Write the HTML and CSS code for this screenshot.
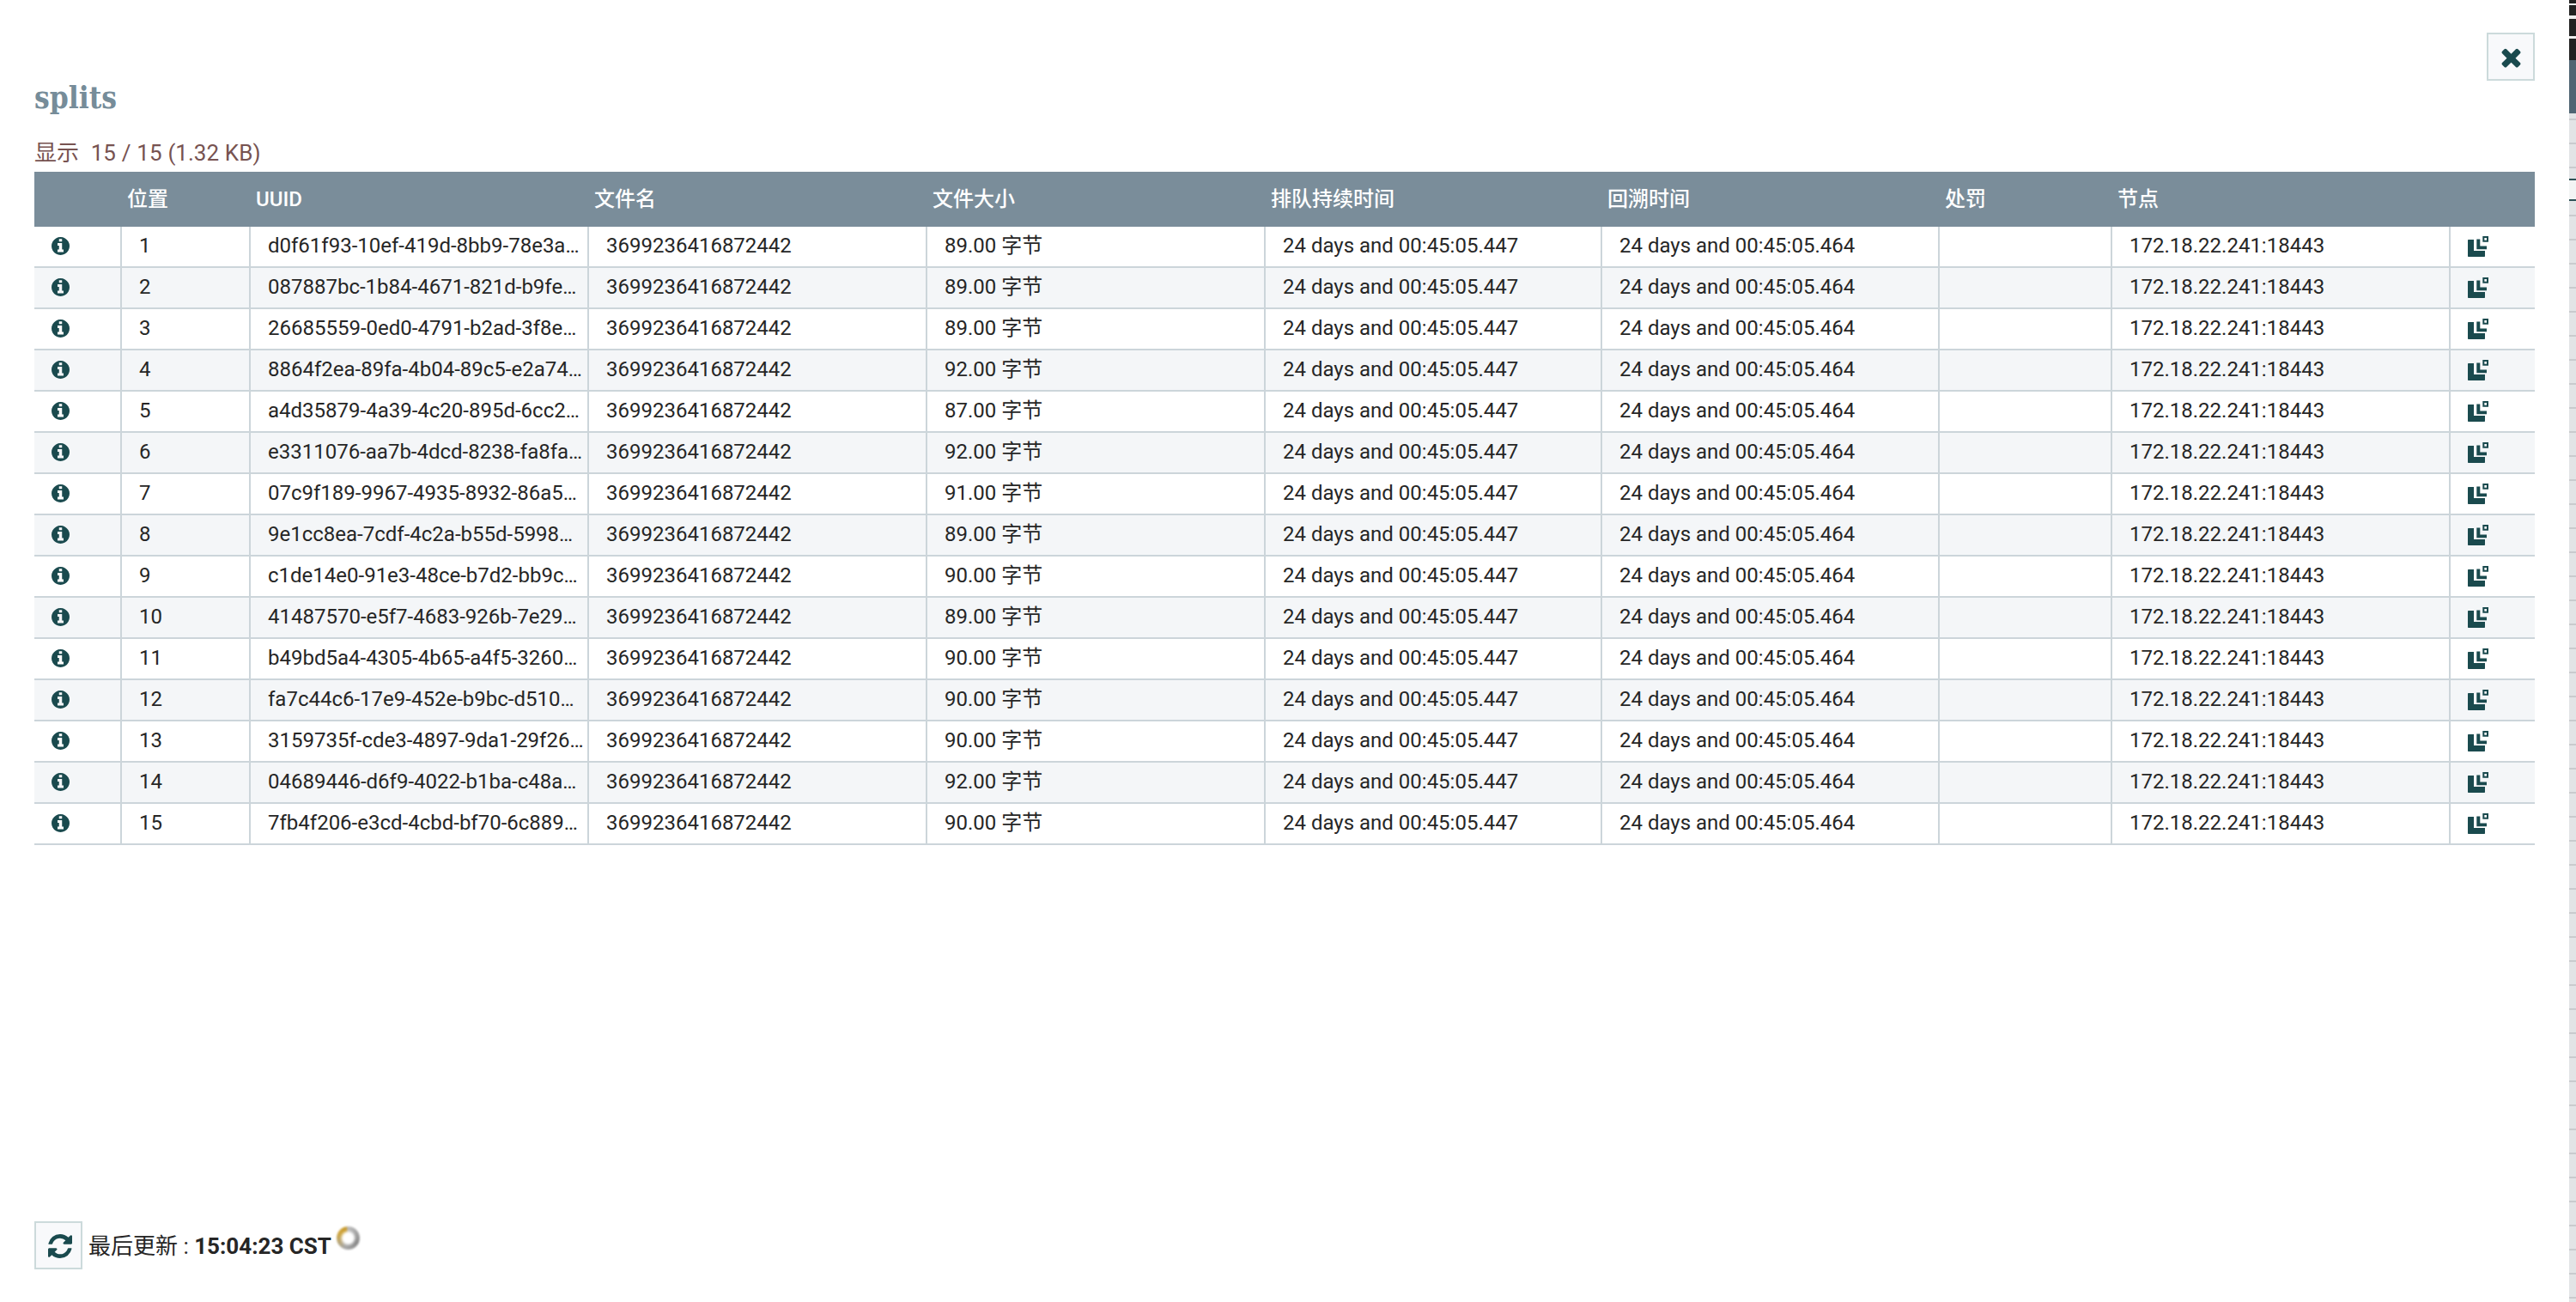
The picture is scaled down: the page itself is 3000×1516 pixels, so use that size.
FILE: index.html
```html
<!DOCTYPE html>
<html lang="zh">
<head>
<meta charset="utf-8">
<title>splits</title>
<link rel="stylesheet" href="styles.css">
</head>
<body>
<svg class="defs" aria-hidden="true">
  <symbol id="i-info" viewBox="128 128 1536 1536"><path d="M1152 1376v-160q0-14-9-23t-23-9h-96v-512q0-14-9-23t-23-9h-320q-14 0-23 9t-9 23v160q0 14 9 23t23 9h96v320h-96q-14 0-23 9t-9 23v160q0 14 9 23t23 9h448q14 0 23-9t9-23zm-128-896v-160q0-14-9-23t-23-9h-192q-14 0-23 9t-9 23v160q0 14 9 23t23 9h192q14 0 23-9t9-23zm640 416q0 209-103 385.5t-279.5 279.5-385.5 103-385.5-103-279.5-279.5-103-385.5 103-385.5 279.5-279.5 385.5-103 385.5 103 279.5 279.5 103 385.5z"/></symbol>
  <symbol id="i-lineage" viewBox="0 0 24 24"><path d="M0.7 4h6.3v13h13v6.3q0 .7-.7.7H.7q-.7 0-.7-.7V4.7q0-.7.7-.7z"/><path d="M10.3 3.4h4v8h7.7v3.9H10.3z"/><path fill-rule="evenodd" d="M17.3 0H24v6.7h-6.7zM19.3 2v2.7H22V2z"/></symbol>
</svg>
<div class="page">
  <main class="dialog">
    <button class="icon-btn close-btn" type="button" aria-label="关闭"><svg class="btn-icon times" viewBox="0 0 1792 1792"><path d="M1490 1322q0 40-28 68l-136 136q-28 28-68 28t-68-28l-294-294-294 294q-28 28-68 28t-68-28l-136-136q-28-28-28-68t28-68l294-294-294-294q-28-28-28-68t28-68l136-136q28-28 68-28t68 28l294 294 294-294q28-28 68-28t68 28l136 136q28 28 28 68t-28 68l-294 294 294 294q28 28 28 68z"/></svg></button>
    <h1 class="title">splits</h1>
    <div class="stats">显示&nbsp; 15 / 15 (1.32 KB)</div>
    <table class="grid">
      <colgroup>
        <col class="c-info"><col class="c-pos"><col class="c-wide"><col class="c-wide"><col class="c-wide"><col class="c-queue"><col class="c-time"><col class="c-pen"><col class="c-wide"><col class="c-act">
      </colgroup>
      <thead>
        <tr><th></th><th>位置</th><th>UUID</th><th>文件名</th><th>文件大小</th><th>排队持续时间</th><th>回溯时间</th><th>处罚</th><th>节点</th><th></th></tr>
      </thead>
      <tbody>
        <tr><td><svg class="ico"><use href="#i-info"/></svg></td><td>1</td><td>d0f61f93-10ef-419d-8bb9-78e3a…</td><td>3699236416872442</td><td>89.00 字节</td><td>24 days and 00:45:05.447</td><td>24 days and 00:45:05.464</td><td></td><td>172.18.22.241:18443</td><td><svg class="ico lin"><use href="#i-lineage"/></svg></td></tr>
        <tr><td><svg class="ico"><use href="#i-info"/></svg></td><td>2</td><td>087887bc-1b84-4671-821d-b9fe…</td><td>3699236416872442</td><td>89.00 字节</td><td>24 days and 00:45:05.447</td><td>24 days and 00:45:05.464</td><td></td><td>172.18.22.241:18443</td><td><svg class="ico lin"><use href="#i-lineage"/></svg></td></tr>
        <tr><td><svg class="ico"><use href="#i-info"/></svg></td><td>3</td><td>26685559-0ed0-4791-b2ad-3f8e…</td><td>3699236416872442</td><td>89.00 字节</td><td>24 days and 00:45:05.447</td><td>24 days and 00:45:05.464</td><td></td><td>172.18.22.241:18443</td><td><svg class="ico lin"><use href="#i-lineage"/></svg></td></tr>
        <tr><td><svg class="ico"><use href="#i-info"/></svg></td><td>4</td><td>8864f2ea-89fa-4b04-89c5-e2a74…</td><td>3699236416872442</td><td>92.00 字节</td><td>24 days and 00:45:05.447</td><td>24 days and 00:45:05.464</td><td></td><td>172.18.22.241:18443</td><td><svg class="ico lin"><use href="#i-lineage"/></svg></td></tr>
        <tr><td><svg class="ico"><use href="#i-info"/></svg></td><td>5</td><td>a4d35879-4a39-4c20-895d-6cc2…</td><td>3699236416872442</td><td>87.00 字节</td><td>24 days and 00:45:05.447</td><td>24 days and 00:45:05.464</td><td></td><td>172.18.22.241:18443</td><td><svg class="ico lin"><use href="#i-lineage"/></svg></td></tr>
        <tr><td><svg class="ico"><use href="#i-info"/></svg></td><td>6</td><td>e3311076-aa7b-4dcd-8238-fa8fa…</td><td>3699236416872442</td><td>92.00 字节</td><td>24 days and 00:45:05.447</td><td>24 days and 00:45:05.464</td><td></td><td>172.18.22.241:18443</td><td><svg class="ico lin"><use href="#i-lineage"/></svg></td></tr>
        <tr><td><svg class="ico"><use href="#i-info"/></svg></td><td>7</td><td>07c9f189-9967-4935-8932-86a5…</td><td>3699236416872442</td><td>91.00 字节</td><td>24 days and 00:45:05.447</td><td>24 days and 00:45:05.464</td><td></td><td>172.18.22.241:18443</td><td><svg class="ico lin"><use href="#i-lineage"/></svg></td></tr>
        <tr><td><svg class="ico"><use href="#i-info"/></svg></td><td>8</td><td>9e1cc8ea-7cdf-4c2a-b55d-5998…</td><td>3699236416872442</td><td>89.00 字节</td><td>24 days and 00:45:05.447</td><td>24 days and 00:45:05.464</td><td></td><td>172.18.22.241:18443</td><td><svg class="ico lin"><use href="#i-lineage"/></svg></td></tr>
        <tr><td><svg class="ico"><use href="#i-info"/></svg></td><td>9</td><td>c1de14e0-91e3-48ce-b7d2-bb9c…</td><td>3699236416872442</td><td>90.00 字节</td><td>24 days and 00:45:05.447</td><td>24 days and 00:45:05.464</td><td></td><td>172.18.22.241:18443</td><td><svg class="ico lin"><use href="#i-lineage"/></svg></td></tr>
        <tr><td><svg class="ico"><use href="#i-info"/></svg></td><td>10</td><td>41487570-e5f7-4683-926b-7e29…</td><td>3699236416872442</td><td>89.00 字节</td><td>24 days and 00:45:05.447</td><td>24 days and 00:45:05.464</td><td></td><td>172.18.22.241:18443</td><td><svg class="ico lin"><use href="#i-lineage"/></svg></td></tr>
        <tr><td><svg class="ico"><use href="#i-info"/></svg></td><td>11</td><td>b49bd5a4-4305-4b65-a4f5-3260…</td><td>3699236416872442</td><td>90.00 字节</td><td>24 days and 00:45:05.447</td><td>24 days and 00:45:05.464</td><td></td><td>172.18.22.241:18443</td><td><svg class="ico lin"><use href="#i-lineage"/></svg></td></tr>
        <tr><td><svg class="ico"><use href="#i-info"/></svg></td><td>12</td><td>fa7c44c6-17e9-452e-b9bc-d510…</td><td>3699236416872442</td><td>90.00 字节</td><td>24 days and 00:45:05.447</td><td>24 days and 00:45:05.464</td><td></td><td>172.18.22.241:18443</td><td><svg class="ico lin"><use href="#i-lineage"/></svg></td></tr>
        <tr><td><svg class="ico"><use href="#i-info"/></svg></td><td>13</td><td>3159735f-cde3-4897-9da1-29f26…</td><td>3699236416872442</td><td>90.00 字节</td><td>24 days and 00:45:05.447</td><td>24 days and 00:45:05.464</td><td></td><td>172.18.22.241:18443</td><td><svg class="ico lin"><use href="#i-lineage"/></svg></td></tr>
        <tr><td><svg class="ico"><use href="#i-info"/></svg></td><td>14</td><td>04689446-d6f9-4022-b1ba-c48a…</td><td>3699236416872442</td><td>92.00 字节</td><td>24 days and 00:45:05.447</td><td>24 days and 00:45:05.464</td><td></td><td>172.18.22.241:18443</td><td><svg class="ico lin"><use href="#i-lineage"/></svg></td></tr>
        <tr><td><svg class="ico"><use href="#i-info"/></svg></td><td>15</td><td>7fb4f206-e3cd-4cbd-bf70-6c889…</td><td>3699236416872442</td><td>90.00 字节</td><td>24 days and 00:45:05.447</td><td>24 days and 00:45:05.464</td><td></td><td>172.18.22.241:18443</td><td><svg class="ico lin"><use href="#i-lineage"/></svg></td></tr>
      </tbody>
    </table>
    <footer class="footer">
      <button class="icon-btn refresh-btn" type="button" aria-label="刷新"><svg class="btn-icon refresh" viewBox="128 128 1536 1536"><path d="M1639 1056q0 5-1 7-64 268-268 434.5t-478 166.5q-146 0-282.5-55t-243.5-157l-129 129q-19 19-45 19t-45-19-19-45v-448q0-26 19-45t45-19h448q26 0 45 19t19 45-19 45l-137 137q71 66 161 102t187 36q134 0 250-65t186-179q11-17 53-117 8-23 30-23h192q13 0 22.5 9.5t9.5 22.5zm25-800v448q0 26-19 45t-45 19h-448q-26 0-45-19t-19-45 19-45l138-138q-148-137-349-137-134 0-250 65t-186 179q-11 17-53 117-8 23-30 23h-199q-13 0-22.5-9.5t-9.5-22.5v-7q65-268 270-434.5t480-166.5q146 0 284 55.5t245 156.5l130-129q19-19 45-19t45 19 19 45z"/></svg></button>
      <span class="updated">最后更新 : <strong>15:04:23 CST</strong></span>
      <span class="spinner"></span>
    </footer>
  </main>
  <aside class="behind"></aside>
</div>
</body>
</html>
```
FILE: styles.css
```css
* { box-sizing: border-box; }
html, body { margin: 0; padding: 0; background: #fff; }
body {
  font-family: Roboto, "Noto Sans CJK SC", sans-serif;
  font-size: 24px;
  line-height: 28px;
  color: #262626;
}
.defs { position: absolute; width: 0; height: 0; }
.page { display: flex; width: 3000px; height: 1516px; overflow: hidden; }
.dialog {
  position: relative;
  flex: 1;
  display: flex;
  flex-direction: column;
  padding: 0 40px 38px;
  background: #fff;
}
.title {
  margin: 86px 0 0;
  height: 56px;
  line-height: 56px;
  font-family: "DejaVu Serif Condensed", "DejaVu Serif", serif;
  font-stretch: condensed;
  font-weight: 700;
  font-size: 35px;
  color: #768c99;
}
.stats {
  height: 58px;
  padding-top: 18px;
  line-height: 36px;
  font-size: 26px;
  word-spacing: 0.4px;
  color: #775351;
}
.grid {
  width: 2912px;
  table-layout: fixed;
  border-collapse: separate;
  border-spacing: 0;
}
.c-info { width: 102px; }
.c-pos { width: 150px; }
.c-wide { width: 394px; }
.c-queue { width: 392px; }
.c-time { width: 393px; }
.c-pen { width: 201px; }
.c-act { width: 98px; }
.grid th {
  height: 64px;
  padding: 0 6px;
  background: #7a8d9a;
  color: #fff;
  font-weight: 500;
  text-align: left;
  white-space: nowrap;
}
.grid td {
  height: 48px;
  padding: 0 0 2px 20px;
  border-bottom: 2px solid #ccd5da;
  border-right: 2px solid #ccd5da;
  white-space: nowrap;
  overflow: hidden;
  vertical-align: middle;
}
.grid td:last-child { border-right: 0; }
.grid tbody tr:nth-child(even) td { background: #f4f6f8; }
.ico { display: block; width: 21px; height: 21px; fill: #1a4a4e; }
.ico.lin { width: 24px; height: 24px; margin-top: 2px; }
.icon-btn {
  display: flex;
  align-items: center;
  justify-content: center;
  width: 56px;
  height: 56px;
  padding: 0;
  border: 2px solid #ccdadb;
  background: #f8f9fb;
}
.refresh-btn { padding-left: 3px; padding-top: 1px; }
.close-btn { position: absolute; top: 38px; right: 40px; }
.btn-icon { fill: #1a4a4e; display: block; }
.times { width: 33px; height: 33px; }
.refresh { width: 28px; height: 28px; }
.footer {
  margin-top: auto;
  display: flex;
  align-items: center;
  height: 56px;
}
.updated { margin: 2px 0 0 7px; font-size: 26px; }
.updated strong { font-weight: 700; }
.spinner {
  width: 27px;
  height: 27px;
  margin: -18px 0 0 6px;
  border-radius: 50%;
  background: radial-gradient(circle, #fff 0 30%, transparent 50%), conic-gradient(#bdbdbd, #8a8a8a 120deg, #a8a8a8 200deg, #cfa640 300deg, #c99a2a 345deg, #bdbdbd);
  filter: blur(1.2px);
}
.behind {
  width: 8px;
  flex: none;
  background:
    linear-gradient(#222 0 4px, #eee 4px 6px, #222 6px 18px, #eee 18px 22px, #222 22px 42px, #eee 42px 45px, #222 45px 70px, #4f6573 70px 132px, transparent 132px),
    linear-gradient(transparent 0 208px, #2d5257 208px 210px, #f3f5f5 210px 232px, #2d5257 232px 234px, transparent 234px),
    repeating-linear-gradient(#e2e4e6 0 26px, #c9cbce 26px 28px);
}
```
